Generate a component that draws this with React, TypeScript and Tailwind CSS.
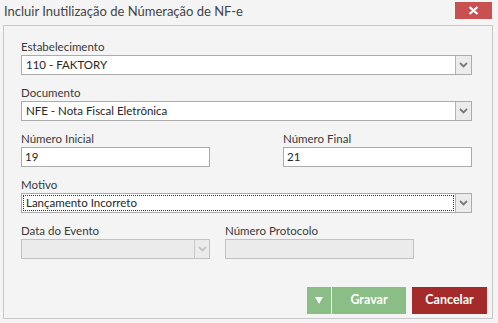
import React from "react";

const font = { fontFamily: 'Lato, "Noto Sans", sans-serif' };

function Chevron({ color = "#7a7a7a" }: { color?: string }) {
  return (
    <svg width="9" height="6" viewBox="0 0 9 6">
      <path d="M1 1 L4.5 4.5 L8 1" fill="none" stroke={color} strokeWidth="1.8" />
    </svg>
  );
}

function Label({ children }: { children: React.ReactNode }) {
  return <div className="h-[16px] leading-[16px] text-[11.5px] text-[#3a3a3a] whitespace-nowrap">{children}</div>;
}

function Select({ value, focused }: { value: string; focused?: boolean }) {
  return (
    <div className="flex h-[20px] w-[451px] border border-[#ababab] bg-white">
      <div className="flex-1 p-[1px]">
        <div
          className={
            "h-full flex items-center pl-[2px] text-[11.5px] text-[#262626] leading-none " +
            (focused ? "border border-dotted border-[#333]" : "border border-transparent")
          }
        >
          {value}
        </div>
      </div>
      <div className="w-[16px] border-l border-[#b4b4b4] bg-[#ececec] flex items-center justify-center">
        <Chevron />
      </div>
    </div>
  );
}

function TextInput({ value, w = "w-[189px]" }: { value: string; w?: string }) {
  return (
    <div className={"h-[20px] border border-[#ababab] bg-white flex items-center pl-[3px] text-[11.5px] text-[#262626] " + w}>
      {value}
    </div>
  );
}

export default function App() {
  return (
    <div className="w-[498px] h-[323px] bg-[#f4f4f4] flex flex-col" style={font}>
      <div className="h-[25px] flex items-start justify-between">
        <div className="pl-[4px] pt-[1px] text-[13px] leading-[20px] text-[#444]">
          Incluir Inutilização de Númeração de NF-e
        </div>
        <div className="mt-[2px] mr-[6px] w-[37px] h-[17px] bg-[#c95050] flex items-center justify-center">
          <svg width="11" height="9" viewBox="0 0 11 9">
            <path d="M1.5 1 L9.5 8 M9.5 1 L1.5 8" stroke="#fff" strokeWidth="2.2" />
          </svg>
        </div>
      </div>
      <div className="ml-[3px] w-[490px] h-[294px] border border-[#c8c8c8] flex flex-col pl-[17px] pt-[13px]">
        <Label>Estabelecimento</Label>
        <Select value="110 - FAKTORY" />
        <div className="h-[10px]" />
        <Label>Documento</Label>
        <Select value="NFE - Nota Fiscal Eletrônica" />
        <div className="h-[10px]" />
        <div className="flex w-[451px] justify-between">
          <div>
            <Label>Número Inicial</Label>
            <TextInput value="19" />
          </div>
          <div>
            <Label>Número Final</Label>
            <TextInput value="21" />
          </div>
        </div>
        <div className="h-[10px]" />
        <Label>Motivo</Label>
        <Select value="Lançamento Incorreto" focused />
        <div className="h-[10px]" />
        <div className="flex gap-[15px]">
          <div>
            <Label>Data do Evento</Label>
            <div className="flex h-[20px] w-[189px] border border-[#c2c2c2] bg-[#ebebeb]">
              <div className="flex-1" />
              <div className="w-[15px] border-l border-[#c8c8c8] flex items-center justify-center">
                <Chevron color="#c4c4c4" />
              </div>
            </div>
          </div>
          <div>
            <Label>Número Protocolo</Label>
            <div className="h-[20px] w-[189px] border border-[#c2c2c2] bg-[#ebebeb]" />
          </div>
        </div>
        <div className="flex justify-end pr-[5px] mt-[28px] gap-[6px]">
          <div className="flex h-[27px]">
            <div className="w-[24px] bg-[#8bbd87] flex items-center justify-center">
              <svg width="8" height="7" viewBox="0 0 8 7">
                <path d="M0 0 L8 0 L4 7 Z" fill="#fff" />
              </svg>
            </div>
            <div className="w-[1px] bg-white" />
            <div className="w-[74px] bg-[#8bbd87] flex items-center justify-center text-white font-bold text-[12.5px]">
              Gravar
            </div>
          </div>
          <div className="w-[75px] h-[27px] bg-[#a52a2a] flex items-center justify-center text-white font-bold text-[12.5px]">
            Cancelar
          </div>
        </div>
      </div>
    </div>
  );
}
